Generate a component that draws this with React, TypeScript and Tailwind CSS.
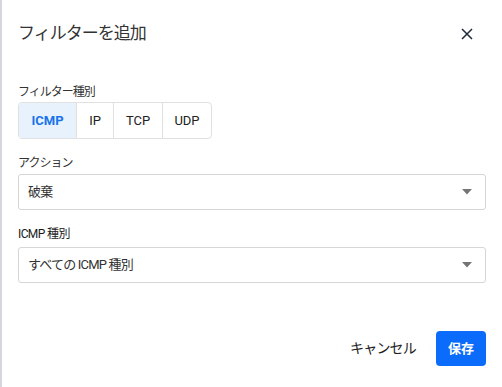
import React from 'react';

const font = { fontFamily: 'Roboto, "Noto Sans CJK JP", sans-serif' };

const filterTypes = ['ICMP', 'IP', 'TCP', 'UDP'];

function Caret() {
  return (
    <svg width="10" height="6" viewBox="0 0 10 6" className="mr-[2px]">
      <path d="M0 0 L10 0 L5 5.5 Z" fill="#757575" />
    </svg>
  );
}

function SelectBox({ value }: { value: string }) {
  return (
    <div className="h-[36px] flex items-center justify-between pl-[9px] pr-[11px] border border-[#d6d6d6] rounded-[3px] bg-white">
      <span className="text-[13px] tracking-[-0.8px] text-[#333]">{value}</span>
      <Caret />
    </div>
  );
}

export default function App() {
  return (
    <div className="w-[502px] h-[387px] flex bg-white text-[#222]" style={font}>
      <div className="w-[2px] bg-[#d4d6dc]" />
      <div className="flex-1 pl-[16px] pr-[16px] flex flex-col">
        <div className="flex items-center justify-between pt-[21px] h-[45px]">
          <h2 className="text-[17px] leading-[24px] tracking-[-1px] text-[#333]">フィルターを追加</h2>
          <svg width="12" height="12" viewBox="0 0 12 12" className="mr-[13px] mt-[1px]">
            <path d="M1 1 L11 11 M11 1 L1 11" stroke="#1f2937" strokeWidth="1.5" />
          </svg>
        </div>

        <div className="mt-[40px] text-[12px] leading-[14px] tracking-[-1px] text-[#333]">フィルター種別</div>
        <div className="mt-[3px] flex w-fit h-[37px] border border-[#e0e0e0] rounded-[4px] overflow-hidden">
          {filterTypes.map((t, i) => (
            <div
              key={t}
              className={`flex items-center justify-center text-[13px] ${
                i === 0 ? 'w-[57px] bg-[#e7f2fd] text-[#1a73e8] font-bold' : 'text-[#222]'
              } ${i === 1 ? 'w-[37px]' : ''} ${i === 2 ? 'w-[49px]' : ''} ${i === 3 ? 'w-[49px]' : ''} ${
                i > 0 ? 'border-l border-[#e0e0e0]' : ''
              }`}
            >
              {t}
            </div>
          ))}
        </div>

        <div className="mt-[17px] text-[12px] leading-[14px] tracking-[-1px] text-[#333]">アクション</div>
        <div className="mt-[4px]">
          <SelectBox value="破棄" />
        </div>

        <div className="mt-[17px] text-[12px] leading-[14px] tracking-[-0.6px] text-[#1a1a1a]">ICMP 種別</div>
        <div className="mt-[6px]">
          <SelectBox value="すべての ICMP 種別" />
        </div>

        <div className="mt-[48px] flex items-center justify-end gap-[20px]">
          <button className="text-[14px] tracking-[-0.8px] text-[#222]">キャンセル</button>
          <button className="w-[50px] h-[35px] rounded-[4px] bg-[#0b6cfb] text-white text-[13px] font-bold">
            保存
          </button>
        </div>
      </div>
    </div>
  );
}
